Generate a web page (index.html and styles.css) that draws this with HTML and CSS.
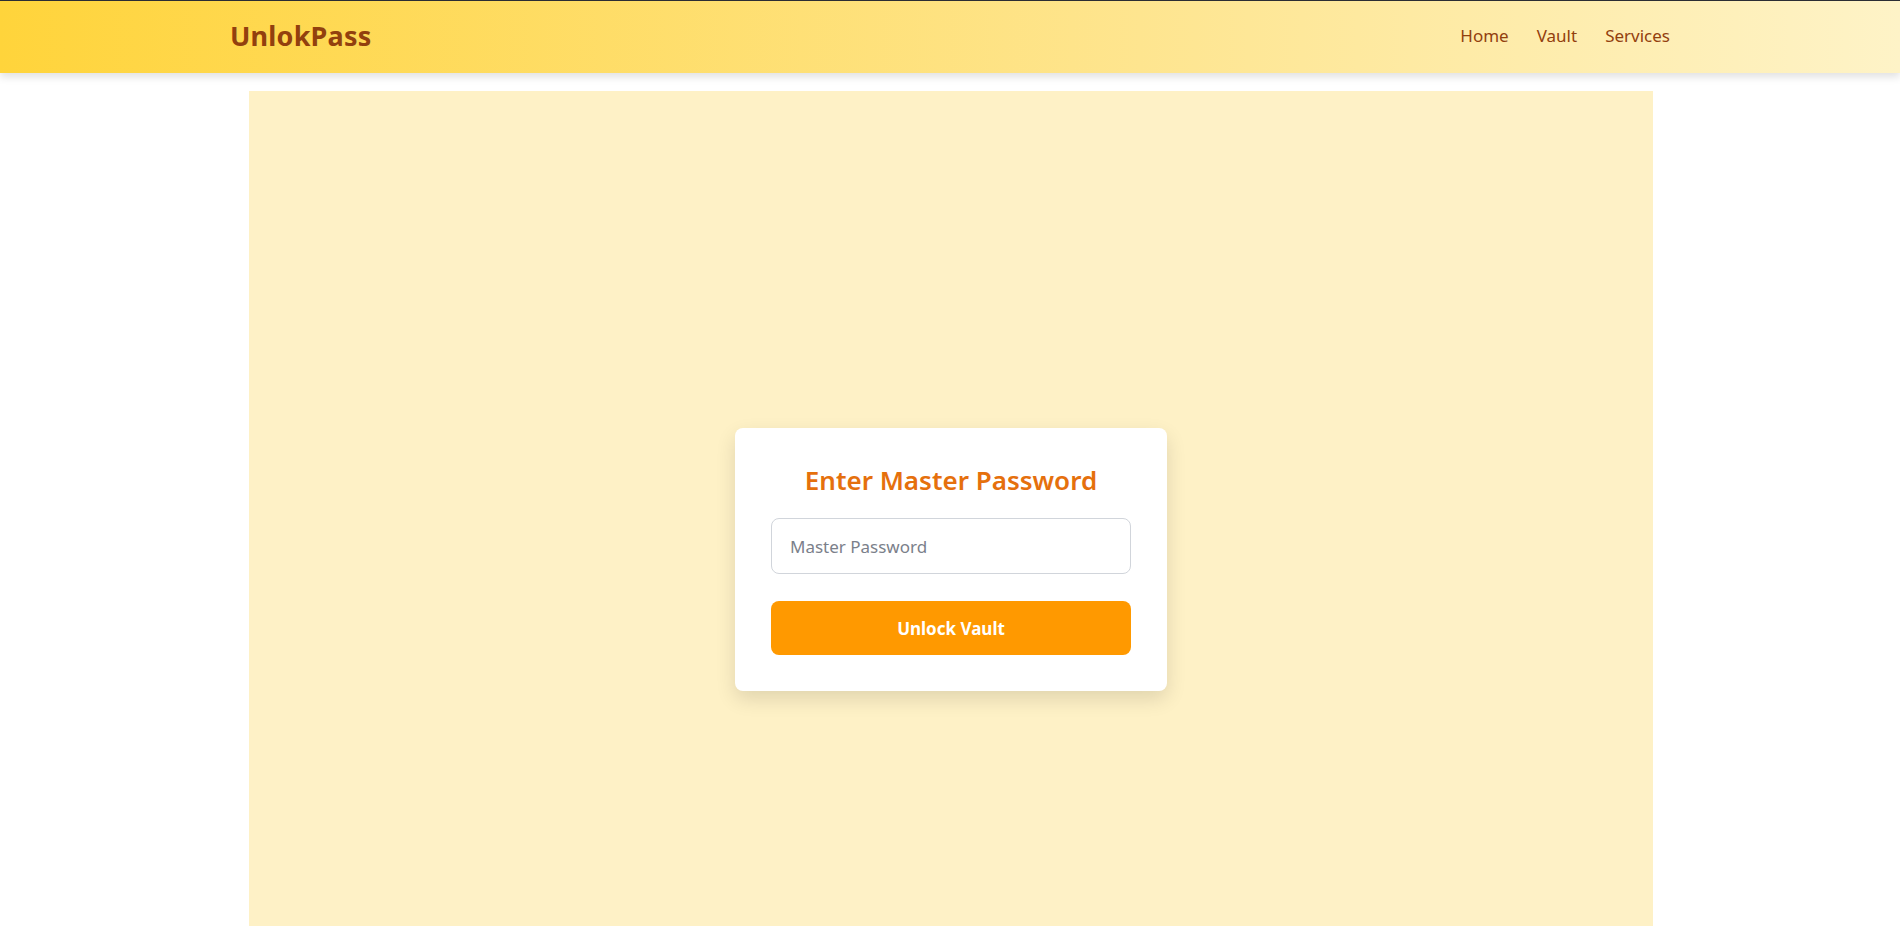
FILE: index.html
```html
<!DOCTYPE html>
<html lang="en">
<head>
<meta charset="utf-8">
<title>UnlokPass</title>
<link rel="stylesheet" href="styles.css">
</head>
<body>
<header class="site-header">
  <div class="header-inner">
    <a class="logo" href="#">UnlokPass</a>
    <nav class="nav">
      <a href="#">Home</a>
      <a href="#">Vault</a>
      <a href="#">Services</a>
    </nav>
  </div>
</header>
<main class="panel">
  <form class="card">
    <h2 class="card-title">Enter Master Password</h2>
    <input class="field" type="password" placeholder="Master Password">
    <button class="btn" type="button">Unlock Vault</button>
  </form>
</main>
</body>
</html>
```

FILE: styles.css
```css
* { box-sizing: border-box; }
html, body { margin: 0; padding: 0; }
body {
  font-family: "Noto Sans", "Open Sans", sans-serif;
  background: #ffffff;
  border-top: 1px solid #2b2d33;
}
.site-header {
  height: 72px;
  background: linear-gradient(90deg, #ffd43b 0%, #fee58f 60%, #fef3c7 100%);
  box-shadow: 0 4px 8px rgba(0,0,0,0.12);
  position: relative;
  z-index: 1;
}
.header-inner {
  max-width: 1440px;
  height: 100%;
  margin: 0 auto;
  padding-bottom: 4px;
  display: flex;
  align-items: center;
  justify-content: space-between;
}
.logo {
  font-size: 27px;
  font-weight: 700;
  color: #92400e;
  text-decoration: none;
  letter-spacing: 0.2px;
}
.nav { display: flex; gap: 28px; }
.nav a {
  font-size: 17px;
  color: #92400e;
  text-decoration: none;
}
.panel {
  width: 1404px;
  height: 937px;
  margin: 18px auto 0;
  position: relative;
  left: 1px;
  background: #fef1c6;
  display: flex;
  align-items: center;
  justify-content: center;
}
.card {
  width: 432px;
  background: #ffffff;
  border-radius: 8px;
  padding: 36px;
  box-shadow: 0 8px 20px rgba(0,0,0,0.12);
  display: flex;
  flex-direction: column;
}
.card-title {
  margin: 0 0 22px;
  text-align: center;
  font-size: 26px;
  line-height: 32px;
  font-weight: 600;
  color: #e5700d;
}
.field {
  height: 56px;
  border: 1px solid #d1d5db;
  border-radius: 8px;
  padding: 0 18px;
  font-family: inherit;
  font-size: 17px;
  color: #374151;
  outline: none;
}
.field::placeholder { color: #7b808a; }
.btn {
  margin-top: 27px;
  height: 54px;
  border: none;
  border-radius: 8px;
  background: #ff9900;
  color: #ffffff;
  font-family: inherit;
  font-size: 17px;
  font-weight: 700;
}
```
